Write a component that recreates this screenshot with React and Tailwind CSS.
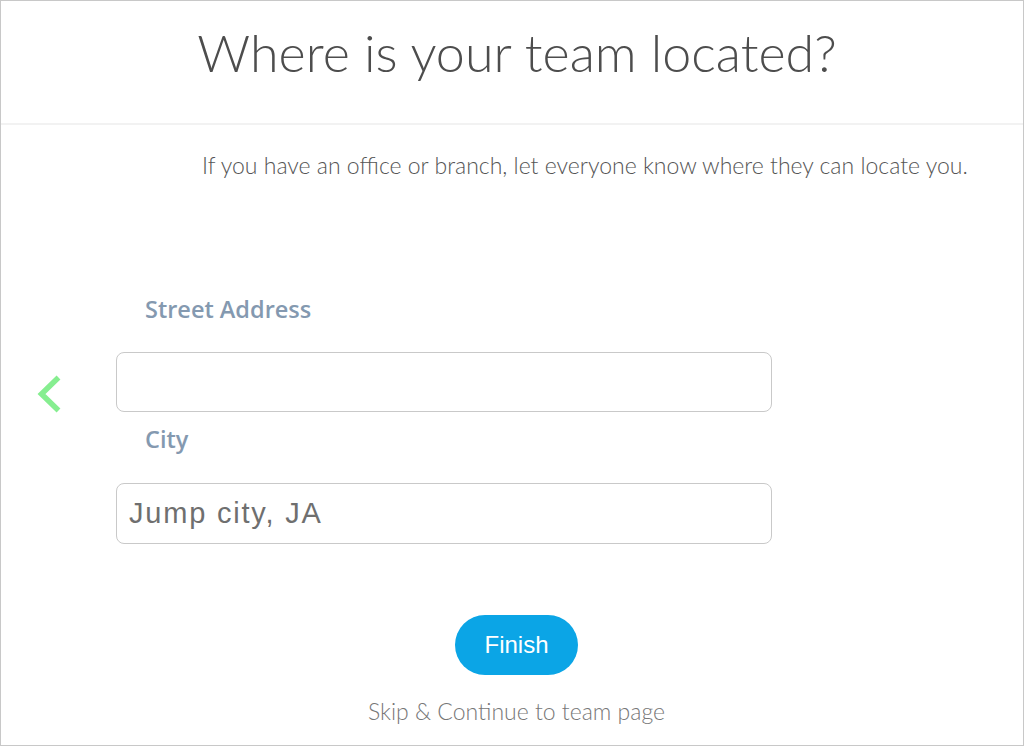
import React from 'react'

const App = () => {
    return (
        <div className="w-[1024px] h-[746px] bg-white border border-[#c8c8c8] overflow-hidden font-['Lato',sans-serif] font-light">
            <header className="h-[124px] border-b-2 border-[#f2f2f2] flex justify-center pt-[18px]">
                <h1 className="text-[52px] leading-[66px] text-[#4d4d4d] font-light ml-[10px]">Where is your team located?</h1>
            </header>

            <p className="mt-[25px] pl-[201px] text-[23px] leading-[30px] text-[#555555]">If you have an office or branch, let everyone know where they can locate you.</p>

            <div className="mt-[113px] flex items-center">
                <div className="w-[115px] pl-[34px] mb-[50px]">
                    <svg width="28" height="38" viewBox="0 0 28 38" fill="none">
                        <path d="M23.5 2.5 L6.5 19 L23.5 35.5" stroke="#86ee90" strokeWidth="5.5" />
                    </svg>
                </div>
                <form className="w-[656px] flex flex-col">
                    <label className="pl-[29px] h-[59px] pt-[1px] font-['Open_Sans',sans-serif] font-semibold text-[23.5px] leading-[30px] text-[#8499b0]">Street Address</label>
                    <input type="text" className="h-[60px] rounded-lg border border-[#c9c9c9] px-3 outline-none" />
                    <label className="pl-[29px] mt-[12px] h-[59px] font-['Open_Sans',sans-serif] font-semibold text-[23.5px] leading-[30px] text-[#8499b0]">City</label>
                    <input type="text" defaultValue="Jump city, JA" className="h-[61px] rounded-lg border border-[#c9c9c9] px-3 outline-none font-['Liberation_Sans',sans-serif] font-normal text-[29px] tracking-[1.8px] text-[#6f6f6f]" />
                </form>
            </div>

            <div className="mt-[71px] flex flex-col items-center pl-[9px]">
                <button type="button" className="w-[123px] h-[60px] rounded-full bg-[#0ba5e6] text-white font-['Liberation_Sans',sans-serif] font-normal text-[24px]">Finish</button>
                <a className="mt-[20px] text-[23px] leading-[32px] text-[#777777]">Skip &amp; Continue to team page</a>
            </div>
        </div>
    )
}

export default App
